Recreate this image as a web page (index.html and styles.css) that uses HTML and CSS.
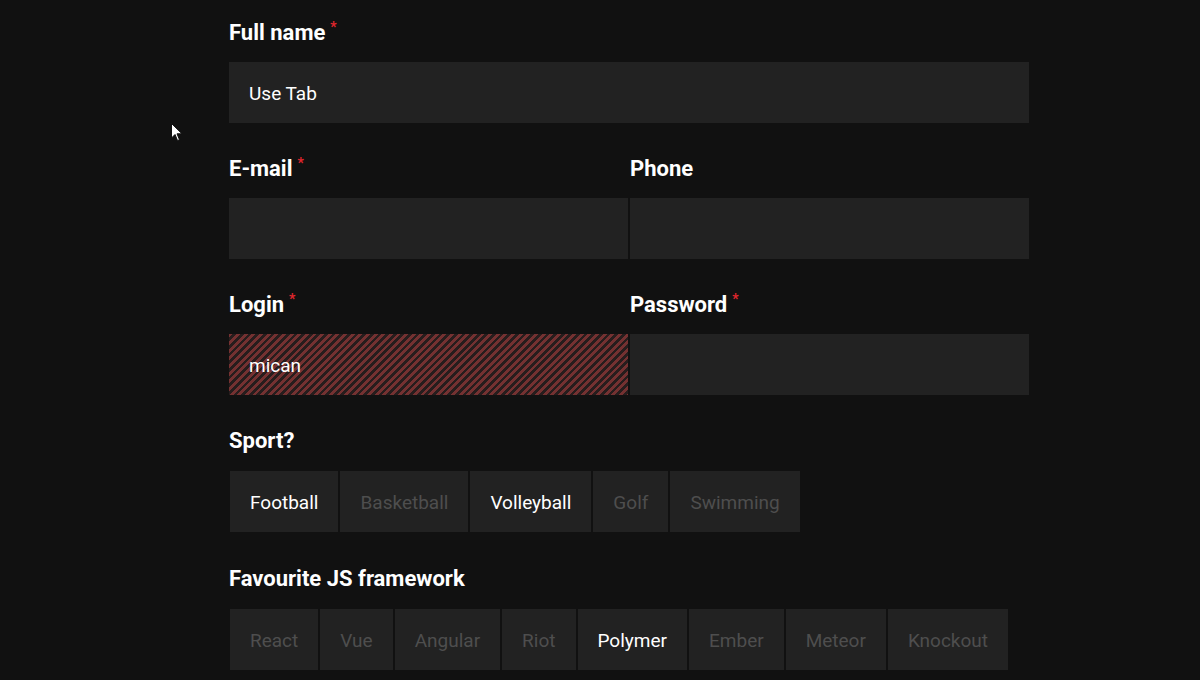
FILE: index.html
```html
<!DOCTYPE html>
<html lang="en">
<head>
    <meta charset="UTF-8">
    <meta name="viewport" content="width=device-width, initial-scale=1.0">
    <title>Registration Form</title>
    <link rel="stylesheet" href="styles.css">
</head>
<body>
    <form id="signup-form">
        <div class="field">
            <label for="fullname" class="required">Full name</label>
            <input type="text" id="fullname" value="Use Tab">
        </div>

        <div class="row">
            <div class="field">
                <label for="email" class="required">E-mail</label>
                <input type="email" id="email">
            </div>
            <div class="field">
                <label for="phone">Phone</label>
                <input type="tel" id="phone">
            </div>
        </div>

        <div class="row">
            <div class="field">
                <label for="login" class="required">Login</label>
                <input type="text" id="login" class="invalid" value="mican">
            </div>
            <div class="field">
                <label for="password" class="required">Password</label>
                <input type="password" id="password">
            </div>
        </div>

        <div class="field">
            <label>Sport?</label>
            <div class="choices">
                <button type="button" class="choice active">Football</button>
                <button type="button" class="choice">Basketball</button>
                <button type="button" class="choice active">Volleyball</button>
                <button type="button" class="choice">Golf</button>
                <button type="button" class="choice">Swimming</button>
            </div>
        </div>

        <div class="field">
            <label>Favourite JS framework</label>
            <div class="choices">
                <button type="button" class="choice">React</button>
                <button type="button" class="choice">Vue</button>
                <button type="button" class="choice">Angular</button>
                <button type="button" class="choice">Riot</button>
                <button type="button" class="choice active">Polymer</button>
                <button type="button" class="choice">Ember</button>
                <button type="button" class="choice">Meteor</button>
                <button type="button" class="choice">Knockout</button>
            </div>
        </div>
    </form>

    <!-- mouse pointer -->
    <svg class="pointer" width="12" height="19" viewBox="0 0 12 19">
        <path d="M0.5 0.5 L0.5 15 L4 11.5 L6.5 17.5 L8.5 16.7 L6 10.8 L11 10.8 Z" fill="#fff" stroke="#111" stroke-width="1"/>
    </svg>
</body>
</html>
```

FILE: styles.css
```css
/* Global Styles */
* {
    margin: 0;
    padding: 0;
    box-sizing: border-box;
}
body {
    font-family: 'Roboto', 'Noto Sans', sans-serif;
    background: #111111;
    color: #ffffff;
    height: 100vh;
    overflow: hidden;
    position: relative;
}
#signup-form {
    width: 800px;
    margin-left: 229px;
    padding-top: 17px;
}

/* Fields */
.field {
    margin-bottom: 30px;
}
.row {
    display: flex;
    gap: 2px;
}
.row .field {
    flex: 1;
}
label {
    display: block;
    height: 30px;
    line-height: 32px;
    margin-bottom: 15px;
    font-size: 22px;
    font-weight: 700;
    color: #ffffff;
}
label.required::after {
    content: "*";
    color: #e0262d;
    font-size: 14px;
    position: relative;
    top: -8px;
    margin-left: 5px;
}

/* Inputs */
input {
    display: block;
    width: 100%;
    height: 61px;
    padding: 2px 20px 0;
    border: none;
    outline: none;
    background: #222222;
    color: #ffffff;
    font-family: inherit;
    font-size: 19px;
}
input.invalid {
    background: repeating-linear-gradient(135deg, #743131 0 2.8px, #271d1d 2.8px 5.4px);
}

/* Choice buttons */
.choices {
    display: flex;
}
.choice {
    height: 61px;
    margin: 1px;
    padding: 2px 20px 0;
    border: none;
    background: #222222;
    color: #4e4e4e;
    font-family: inherit;
    font-size: 19px;
    cursor: pointer;
}
.choice.active {
    color: #ffffff;
}

.pointer {
    position: absolute;
    left: 171px;
    top: 123px;
}
```
